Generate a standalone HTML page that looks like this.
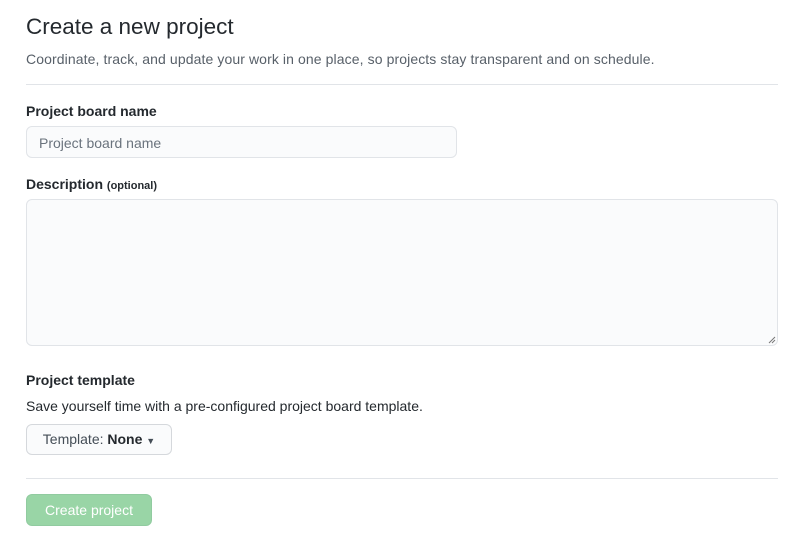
<!DOCTYPE html>
<html><head><style>
body{margin:0;width:800px;height:535px;background:#fff;font-family:"Liberation Sans",sans-serif;color:#24292e;position:relative;overflow:hidden}
.a{position:absolute}
h1{position:absolute;left:26px;top:14px;margin:0;font-size:22.5px;font-weight:400}
.sub{left:26px;top:51px;font-size:14px;color:#586069;letter-spacing:0.1px}
.hr{left:26px;right:22px;height:1px;background:#e1e4e8}
.lbl{font-size:14px;font-weight:bold;left:26px}
.inp{left:26px;background:#fafbfc;border:1px solid #e1e4e8;border-radius:6px;box-sizing:border-box}
</style></head><body>
<h1>Create a new project</h1>
<div class="a sub">Coordinate, track, and update your work in one place, so projects stay transparent and on schedule.</div>
<div class="a hr" style="top:84px"></div>
<div class="a lbl" style="top:103px">Project board name</div>
<div class="a inp" style="top:126px;width:431px;height:32px;font-size:14px;color:#6a737d;padding:8px 12px">Project board name</div>
<div class="a lbl" style="top:176px">Description <span style="font-size:11px">(optional)</span></div>
<div class="a inp" style="top:199px;width:752px;height:147px"></div>
<svg class="a" style="left:768px;top:336px" width="8" height="8"><path d="M1 7L7 1M4 7L7 4" stroke="#777" stroke-width="1"/></svg>
<div class="a lbl" style="top:372px">Project template</div>
<div class="a" style="left:26px;top:398px;font-size:14px;color:#24292e">Save yourself time with a pre-configured project board template.</div>
<div class="a" style="left:26px;top:424px;width:146px;height:31px;box-sizing:border-box;border:1px solid #d5d8dc;border-radius:6px;background:#fafbfc;font-size:14px;text-align:center;line-height:29px;color:#444d56">Template: <b style="color:#24292e">None</b> <span style="font-size:9px">▼</span></div>
<div class="a hr" style="top:478px"></div>
<div class="a" style="left:26px;top:494px;width:126px;height:32px;border-radius:6px;background:#94d3a2;border:1px solid #8cc99b;box-sizing:border-box;color:#fff;opacity:.95;font-size:14px;text-align:center;line-height:30px">Create project</div>
</body></html>
